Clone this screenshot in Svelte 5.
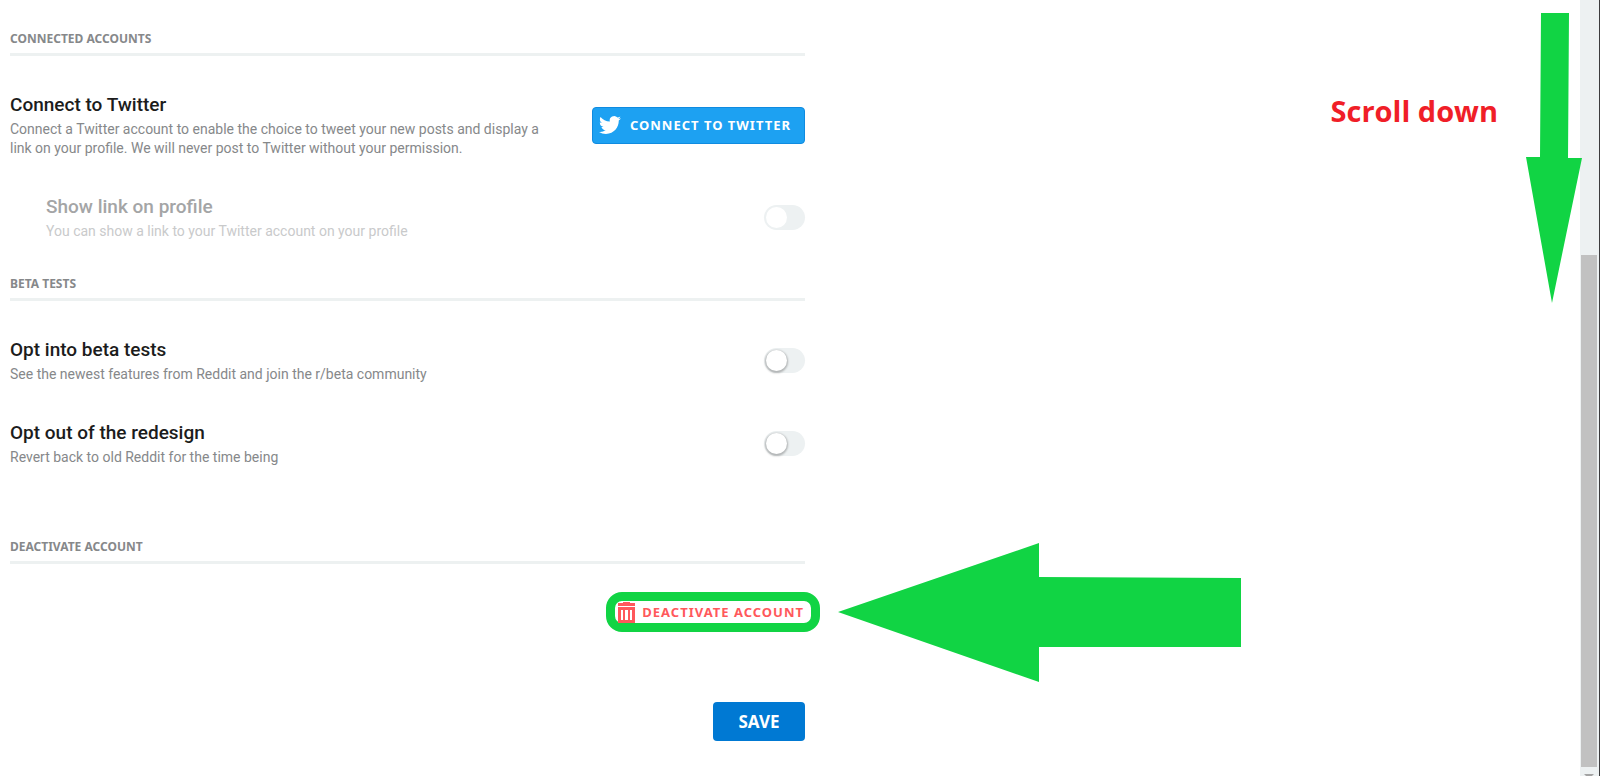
<script lang="ts">
    interface Setting {
        id: string
        title: string
        description: string
        checked: boolean
    }

    let showLink = $state(false)

    let beta: Setting[] = $state([
        {
            id: "beta-tests",
            title: "Opt into beta tests",
            description: "See the newest features from Reddit and join the r/beta community",
            checked: false
        },
        {
            id: "redesign",
            title: "Opt out of the redesign",
            description: "Revert back to old Reddit for the time being",
            checked: false
        }
    ])
</script>

<div class="page">
    <main>
        <section>
            <h2>Connected accounts</h2>
            <div class="row">
                <div class="text">
                    <h3>Connect to Twitter</h3>
                    <p>
                        Connect a Twitter account to enable the choice to tweet your new posts and display a
                        link on your profile. We will never post to Twitter without your permission.
                    </p>
                </div>
                <button class="twitter" type="button">
                    <svg viewBox="0 0 24 24" aria-hidden="true">
                        <path
                            d="M23.953 4.57a10 10 0 01-2.825.775 4.958 4.958 0 002.163-2.723c-.951.555-2.005.959-3.127 1.184a4.92 4.92 0 00-8.384 4.482C7.69 8.095 4.067 6.13 1.64 3.162a4.822 4.822 0 00-.666 2.475c0 1.71.87 3.213 2.188 4.096a4.904 4.904 0 01-2.228-.616v.06a4.923 4.923 0 003.946 4.827 4.996 4.996 0 01-2.212.085 4.936 4.936 0 004.604 3.417 9.867 9.867 0 01-6.102 2.105c-.39 0-.779-.023-1.17-.067a13.995 13.995 0 007.557 2.209c9.053 0 13.998-7.496 13.998-13.985 0-.21 0-.42-.015-.63A9.935 9.935 0 0024 4.59z"
                        />
                    </svg>
                    Connect to Twitter
                </button>
            </div>
            <div class="row nested">
                <label class="text" for="show-link">
                    <span class="title">Show link on profile</span>
                    <span class="description">You can show a link to your Twitter account on your profile</span>
                </label>
                <input id="show-link" class="toggle" type="checkbox" bind:checked={showLink} disabled />
            </div>
        </section>

        <section class="beta">
            <h2>Beta tests</h2>
            {#each beta as setting (setting.id)}
                <div class="row">
                    <label class="text" for={setting.id}>
                        <span class="title">{setting.title}</span>
                        <span class="description">{setting.description}</span>
                    </label>
                    <input id={setting.id} class="toggle" type="checkbox" bind:checked={setting.checked} />
                </div>
            {/each}
        </section>

        <section class="deactivate">
            <h2>Deactivate account</h2>
            <div class="highlight">
                <button type="button">
                    <svg viewBox="0 0 17 21" aria-hidden="true">
                        <path d="M5 0h7v1h5v3H0V1h5z" />
                        <path
                            fill-rule="evenodd"
                            d="M0 5h17v16H0zM3 8v10h2V8zM7 8v10h3V8zM12 8v10h2V8z"
                        />
                    </svg>
                    Deactivate account
                </button>
            </div>
        </section>

        <button class="save" type="button">Save</button>
    </main>

    <p class="note">Scroll down</p>
    <svg class="arrow down" viewBox="0 0 56 290" aria-hidden="true">
        <path d="M15 0H43L42 145H56L26 290L0 144H14z" />
    </svg>
    <svg class="arrow left" viewBox="0 0 403 139" aria-hidden="true">
        <path d="M0 69L201 0V34L403 35V104H201V139z" />
    </svg>

    <div class="scrollbar" aria-hidden="true">
        <div class="thumb"></div>
        <svg viewBox="0 0 10 2"><path d="M0 0h10L8 2H2z" /></svg>
    </div>
</div>

<style>
    :global(body) {
        margin: 0;
        background: #fff;
    }

    .page {
        position: relative;
        display: flex;
        justify-content: space-between;
        min-height: 100vh;
        overflow: hidden;
        font-family: "Noto Sans", sans-serif;
        color: #1c1c1c;
    }

    main {
        display: flex;
        flex-direction: column;
        flex: 0 1 795px;
        padding: 29px 10px 35px;
    }

    h2 {
        margin: 0;
        padding-bottom: 4px;
        border-bottom: 3px solid #edf1f1;
        font-size: 12px;
        line-height: 20px;
        font-weight: 700;
        text-transform: uppercase;
        color: #86888a;
    }

    .row {
        display: flex;
        align-items: center;
        justify-content: space-between;
        gap: 24px;
        margin-top: 36px;
    }

    .nested {
        padding-left: 36px;
    }

    .text {
        display: flex;
        flex-direction: column;
        gap: 2px;
        max-width: 540px;
        font-family: Roboto, sans-serif;
    }

    h3,
    .title {
        margin: 0;
        font-size: 19px;
        line-height: 26px;
        font-weight: 500;
    }

    .text p,
    .description {
        margin: 0;
        font-size: 14px;
        line-height: 19px;
        color: #86888a;
    }

    .nested .title {
        color: #a4a5a6;
    }

    .nested .description {
        color: #c9cacb;
    }

    button {
        display: flex;
        align-items: center;
        border: none;
        background: none;
        font-family: inherit;
        font-weight: 700;
        text-transform: uppercase;
        white-space: nowrap;
        cursor: pointer;
    }

    button svg {
        flex: none;
        fill: currentColor;
    }

    .twitter {
        gap: 9px;
        height: 37px;
        padding: 0 13px 0 6px;
        border: 1px solid #0f8be0;
        border-radius: 4px;
        background: #1da1f2;
        font-size: 13px;
        letter-spacing: 1px;
        color: #fff;
    }

    .twitter svg {
        width: 22px;
        height: 22px;
    }

    .toggle {
        appearance: none;
        flex: none;
        width: 41px;
        height: 25px;
        margin: 0;
        padding: 2px;
        border-radius: 13px;
        background: #edf1f2;
    }

    .toggle::before {
        content: "";
        display: block;
        width: 21px;
        height: 21px;
        border-radius: 50%;
        background: #fff;
        box-shadow: 0 1px 2px 1px rgba(0, 0, 0, 0.25);
    }

    .toggle:checked::before {
        margin-left: 16px;
    }

    .toggle:disabled::before {
        box-shadow: none;
    }

    .beta {
        margin-top: 33px;
    }

    .deactivate {
        display: flex;
        flex-direction: column;
        margin-top: 70px;
    }

    .highlight {
        align-self: flex-end;
        margin: 28px -15px 0 0;
        border: 9px solid #11d444;
        border-radius: 16px;
    }

    .highlight button {
        gap: 7px;
        height: 22px;
        padding: 0 7px 0 3px;
        font-size: 13px;
        letter-spacing: 1px;
        color: #ff585b;
    }

    .highlight svg {
        width: 17px;
        height: 21px;
    }

    .save {
        align-self: flex-end;
        justify-content: center;
        width: 92px;
        height: 39px;
        margin-top: 70px;
        border-radius: 4px;
        background: #0079d3;
        font-size: 17px;
        color: #fff;
    }

    .note {
        position: absolute;
        top: 90px;
        right: 102px;
        margin: 0;
        font-family: "Open Sans", sans-serif;
        font-size: 29px;
        line-height: 42px;
        font-weight: 700;
        color: #f01e28;
    }

    .arrow {
        position: absolute;
        z-index: 1;
        fill: #11d444;
    }

    .down {
        top: 13px;
        right: 18px;
        width: 56px;
        height: 290px;
    }

    .left {
        top: 543px;
        left: 838px;
        width: 403px;
        height: 139px;
    }

    .scrollbar {
        display: flex;
        flex-direction: column;
        align-items: center;
        justify-content: flex-end;
        gap: 7px;
        flex: 0 0 18px;
        padding-right: 1px;
        border-right: 1px solid #3c3c3e;
        background: #edf1f2;
    }

    .thumb {
        width: 16px;
        height: 66%;
        background: #c1c1c1;
    }

    .scrollbar svg {
        width: 10px;
        height: 2px;
        fill: #a3a3a3;
    }
</style>
